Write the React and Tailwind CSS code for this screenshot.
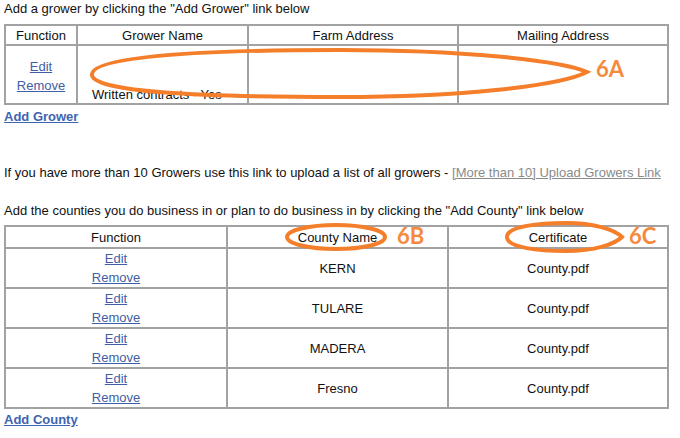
export default function App() {
  const counties = ['KERN', 'TULARE', 'MADERA', 'Fresno'];

  return (
    <div className="relative w-[680px] h-[438px] bg-white text-[13px] text-[#111] font-['Liberation_Sans',Arial,sans-serif] leading-none overflow-hidden">
      <div className="pl-[4px] pt-[2px] h-[24px]">Add a grower by clicking the "Add Grower" link below</div>

      {/* growers table */}
      <table className="ml-[4px] w-[665px] border-collapse border-2 border-[#a2a2a2] table-fixed">
        <thead>
          <tr className="h-[20px]">
            <th className="w-[72px] border-2 border-[#a2a2a2] font-normal">Function</th>
            <th className="w-[171px] border-2 border-[#a2a2a2] font-normal">Grower Name</th>
            <th className="w-[210px] border-2 border-[#a2a2a2] font-normal">Farm Address</th>
            <th className="border-2 border-[#a2a2a2] font-normal">Mailing Address</th>
          </tr>
        </thead>
        <tbody>
          <tr className="h-[59px]">
            <td className="border-2 border-[#a2a2a2] text-center align-middle">
              <div className="flex flex-col items-center gap-[6px] pt-[2px]">
                <a className="underline text-[#3f5ea5]">Edit</a>
                <a className="underline text-[#3f5ea5]">Remove</a>
              </div>
            </td>
            <td className="border-2 border-[#a2a2a2] align-bottom pl-[14px] pb-[2px] whitespace-nowrap">Written contracts - Yes</td>
            <td className="border-2 border-[#a2a2a2]"></td>
            <td className="border-2 border-[#a2a2a2]"></td>
          </tr>
        </tbody>
      </table>
      <div className="pl-[4px] pt-[5px]">
        <a className="font-bold underline text-[#3e64b0]">Add Grower</a>
      </div>

      <div className="pl-[4px] mt-[42px] leading-[15px] whitespace-nowrap">
        If you have more than 10 Growers use this link to upload a list of all growers -{' '}
        <a className="underline text-[#8a8a8a]">[More than 10] Upload Growers Link</a>
      </div>

      <div className="pl-[4px] mt-[23px] leading-[15px] whitespace-nowrap">
        Add the counties you do business in or plan to do business in by clicking the "Add County" link below
      </div>

      {/* counties table */}
      <table className="mt-[7px] ml-[4px] w-[665px] border-collapse border-2 border-[#a2a2a2] table-fixed">
        <thead>
          <tr className="h-[22px]">
            <th className="w-[222px] border-2 border-[#a2a2a2] font-normal">Function</th>
            <th className="w-[221px] border-2 border-[#a2a2a2] font-normal">County Name</th>
            <th className="border-2 border-[#a2a2a2] font-normal">Certificate</th>
          </tr>
        </thead>
        <tbody>
          {counties.map((c) => (
            <tr key={c} className="h-[40px]">
              <td className="border-2 border-[#a2a2a2] text-center">
                <div className="flex flex-col items-center gap-[6px]">
                  <a className="underline text-[#3f5ea5]">Edit</a>
                  <a className="underline text-[#3f5ea5]">Remove</a>
                </div>
              </td>
              <td className="border-2 border-[#a2a2a2] text-center">{c}</td>
              <td className="border-2 border-[#a2a2a2] text-center">County.pdf</td>
            </tr>
          ))}
        </tbody>
      </table>
      <div className="pl-[4px] pt-[4px]">
        <a className="font-bold underline text-[#3e64b0]">Add County</a>
      </div>

      {/* annotations */}
      <svg className="absolute inset-0 pointer-events-none" width="680" height="438" viewBox="0 0 680 438">
        <g fill="none" stroke="#f47e2a" strokeWidth="4">
          <path d="M 92 74 C 94 56, 200 50, 340 50 C 460 50, 560 60, 587 72 C 560 86, 460 97, 340 97 C 200 97, 90 92, 92 74 Z" />
          <ellipse cx="336" cy="237" rx="49" ry="12" />
          <path d="M 507 237 C 507 226, 540 223, 566 223 C 595 223, 615 230, 622 237 C 615 244, 595 251, 566 251 C 540 251, 507 248, 507 237 Z" />
        </g>
      </svg>
      <div className="absolute left-[596px] top-[58px] text-[22px] font-bold text-[#f58a3c] font-['Lato',sans-serif]">6A</div>
      <div className="absolute left-[397px] top-[225px] text-[22px] font-bold text-[#f58a3c] font-['Lato',sans-serif]">6B</div>
      <div className="absolute left-[629px] top-[225px] text-[22px] font-bold text-[#f58a3c] font-['Lato',sans-serif]">6C</div>
    </div>
  );
}
